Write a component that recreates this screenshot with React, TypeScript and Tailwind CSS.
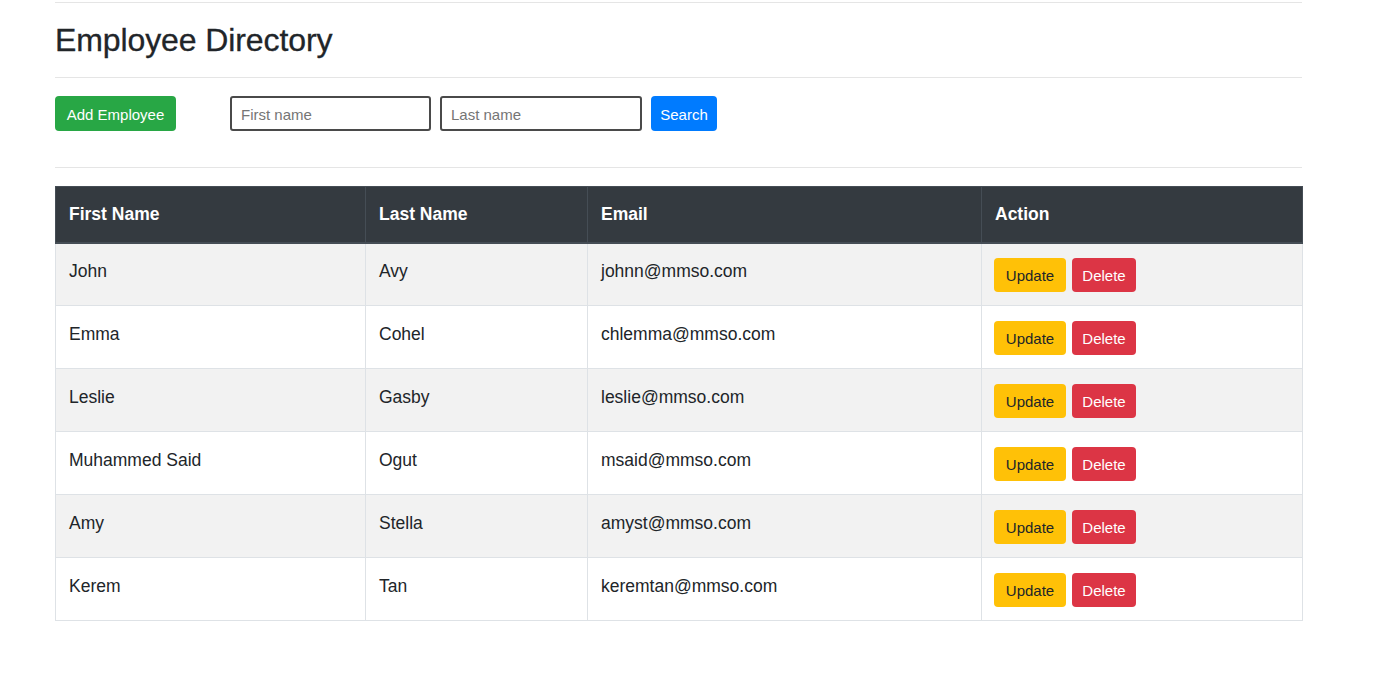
import React from 'react';

type Employee = {
  firstName: string;
  lastName: string;
  email: string;
};

const employees: Employee[] = [
  { firstName: 'John', lastName: 'Avy', email: 'johnn@mmso.com' },
  { firstName: 'Emma', lastName: 'Cohel', email: 'chlemma@mmso.com' },
  { firstName: 'Leslie', lastName: 'Gasby', email: 'leslie@mmso.com' },
  { firstName: 'Muhammed Said', lastName: 'Ogut', email: 'msaid@mmso.com' },
  { firstName: 'Amy', lastName: 'Stella', email: 'amyst@mmso.com' },
  { firstName: 'Kerem', lastName: 'Tan', email: 'keremtan@mmso.com' },
];

const font = { fontFamily: '"Liberation Sans", Arial, sans-serif' };

function Rule() {
  return <div className="h-px w-full bg-[#e5e5e5]" />;
}

export default function App() {
  return (
    <div className="min-h-[680px] bg-white text-[#212529]" style={font}>
      <div className="ml-[55px] w-[1247px] pt-[2px]">
        <Rule />
        <div className="flex h-[74px] items-center">
          <h2 className="text-[32px] font-medium leading-none tracking-[-0.1px] [-webkit-text-stroke:0.3px_#212529]">
            Employee Directory
          </h2>
        </div>
        <Rule />

        <div className="mt-[18px] flex h-[35px] items-center">
          <button className="h-[35px] w-[121px] rounded-[4px] bg-[#28a745] pt-[3px] text-[15px] text-white">
            Add Employee
          </button>
          <input
            placeholder="First name"
            className="ml-[54px] h-[35px] w-[201px] rounded-[3px] border-2 border-[#4a4a4a] px-[9px] pt-[2px] text-[15px] outline-none placeholder:text-[#757575]"
          />
          <input
            placeholder="Last name"
            className="ml-[9px] h-[35px] w-[202px] rounded-[3px] border-2 border-[#4a4a4a] px-[9px] pt-[2px] text-[15px] outline-none placeholder:text-[#757575]"
          />
          <button className="ml-[9px] h-[35px] w-[66px] rounded-[4px] bg-[#007bff] pt-[3px] text-[15px] text-white">
            Search
          </button>
        </div>

        <div className="mt-[36px]">
          <Rule />
        </div>

        <table className="mt-[18px] w-[1247px] table-fixed border-collapse text-[17.5px]">
          <colgroup>
            <col className="w-[310px]" />
            <col className="w-[222px]" />
            <col className="w-[394px]" />
            <col className="w-[321px]" />
          </colgroup>
          <thead>
            <tr className="h-[56px] bg-[#343a40] text-white">
              {['First Name', 'Last Name', 'Email', 'Action'].map((h) => (
                <th
                  key={h}
                  className="border border-b-2 border-[#454d55] px-[13px] text-left font-bold"
                >
                  {h}
                </th>
              ))}
            </tr>
          </thead>
          <tbody>
            {employees.map((e, i) => (
              <tr
                key={e.email}
                className={i % 2 === 0 ? 'h-[63px] bg-[#f2f2f2]' : 'h-[63px] bg-white'}
              >
                <td className="border border-[#dee2e6] px-[13px] pb-[6px]">{e.firstName}</td>
                <td className="border border-[#dee2e6] px-[13px] pb-[6px]">{e.lastName}</td>
                <td className="border border-[#dee2e6] px-[13px] pb-[6px]">{e.email}</td>
                <td className="border border-[#dee2e6] px-[12px]">
                  <div className="flex gap-[6px] pt-[2px]">
                    <button className="h-[34px] w-[72px] rounded-[4px] bg-[#ffc107] pt-[2px] text-[15px] text-[#212529]">
                      Update
                    </button>
                    <button className="h-[34px] w-[64px] rounded-[4px] bg-[#dc3545] pt-[2px] text-[15px] text-white">
                      Delete
                    </button>
                  </div>
                </td>
              </tr>
            ))}
          </tbody>
        </table>
      </div>
    </div>
  );
}
